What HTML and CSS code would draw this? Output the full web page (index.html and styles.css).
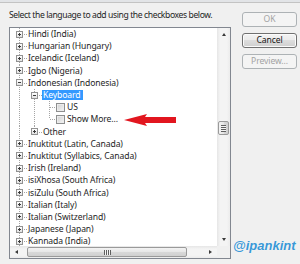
FILE: index.html
```html
<!DOCTYPE html>
<html>
<head>
<meta charset="utf-8">
<link rel="stylesheet" href="styles.css">
</head>
<body>
<div class="dialog">
  <div class="main">
    <div class="prompt">Select the language to add using the checkboxes below.</div>
    <div class="treebox">
      <div class="rows">
        <div class="row"><span class="c t"><span class="exp plus"></span></span><span class="lbl">Hindi (India)</span></div>
        <div class="row"><span class="c t"><span class="exp plus"></span></span><span class="lbl">Hungarian (Hungary)</span></div>
        <div class="row"><span class="c t"><span class="exp plus"></span></span><span class="lbl">Icelandic (Iceland)</span></div>
        <div class="row"><span class="c t"><span class="exp plus"></span></span><span class="lbl">Igbo (Nigeria)</span></div>
        <div class="row"><span class="c t"><span class="exp minus"></span></span><span class="lbl">Indonesian (Indonesia)</span></div>
        <div class="row"><span class="c v"></span><span class="c t"><span class="exp minus"></span></span><span class="lbl sel">Keyboard</span></div>
        <div class="row"><span class="c v"></span><span class="c v"></span><span class="c t"></span><span class="cb"></span><span class="lbl cbl">US</span></div>
        <div class="row"><span class="c v"></span><span class="c v"></span><span class="c l"></span><span class="cb"></span><span class="lbl cbl">Show More...</span></div>
        <div class="row"><span class="c v"></span><span class="c l"><span class="exp plus"></span></span><span class="lbl">Other</span></div>
        <div class="row"><span class="c t"><span class="exp plus"></span></span><span class="lbl">Inuktitut (Latin, Canada)</span></div>
        <div class="row"><span class="c t"><span class="exp plus"></span></span><span class="lbl">Inuktitut (Syllabics, Canada)</span></div>
        <div class="row"><span class="c t"><span class="exp plus"></span></span><span class="lbl">Irish (Ireland)</span></div>
        <div class="row"><span class="c t"><span class="exp plus"></span></span><span class="lbl">isiXhosa (South Africa)</span></div>
        <div class="row"><span class="c t"><span class="exp plus"></span></span><span class="lbl">isiZulu (South Africa)</span></div>
        <div class="row"><span class="c t"><span class="exp plus"></span></span><span class="lbl">Italian (Italy)</span></div>
        <div class="row"><span class="c t"><span class="exp plus"></span></span><span class="lbl">Italian (Switzerland)</span></div>
        <div class="row"><span class="c t"><span class="exp plus"></span></span><span class="lbl">Japanese (Japan)</span></div>
        <div class="row"><span class="c t"><span class="exp plus"></span></span><span class="lbl">Kannada (India)</span></div>
      </div>
      <div class="vscroll">
        <div class="sbtn"><span class="tri up"></span></div>
        <div class="vtrack"><div class="vthumb"><span class="vgrip"></span></div></div>
        <div class="sbtn"><span class="tri down"></span></div>
      </div>
      <div class="hscroll">
        <div class="hbtn"><span class="tri left"></span></div>
        <div class="htrack"><div class="hthumb"><span class="hgrip"></span></div></div>
        <div class="hbtn"><span class="tri right"></span></div>
      </div>
      <div class="corner"></div>
    </div>
  </div>
  <div class="side">
    <button class="btn dis">OK</button>
    <button class="btn def">Cancel</button>
    <button class="btn dis">Preview...</button>
    <div class="mark">@ipankint</div>
  </div>
  <svg class="arrow" width="54" height="14" viewBox="0 0 54 14">
    <polygon points="1,7 24,1 22,4 53,4 53,10 22,10 24,13" fill="#e2161f"/>
  </svg>
</div>
</body>
</html>
```
FILE: styles.css
```css
html, body {
  margin: 0;
  padding: 0;
}
body {
  background: #e2e4e7;
  font-family: "Noto Sans", "Open Sans", sans-serif;
  font-size: 8.6px;
  letter-spacing: -0.1px;
  color: #1e1e1e;
  width: 300px;
  height: 264px;
  overflow: hidden;
}
.dialog {
  position: relative;
  margin-top: 2px;
  height: 262px;
  box-sizing: border-box;
  border-top: 1px solid #c3c3c3;
  background: #f0f0f0;
  display: flex;
}
.main {
  padding-left: 9px;
  width: 222px;
  flex: none;
}
.prompt {
  padding-top: 6px;
  line-height: 12px;
  height: 12px;
  margin-bottom: 6px;
  white-space: nowrap;
  letter-spacing: -0.4px;
}
.treebox {
  width: 222px;
  height: 232px;
  box-sizing: border-box;
  border: 1px solid #828790;
  background: #fff;
  display: grid;
  grid-template-columns: 1fr 13px;
  grid-template-rows: 1fr 12px;
}
.rows {
  padding-left: 2px;
  overflow: hidden;
  --vd: repeating-linear-gradient(to bottom, #a5a5a5 0 1px, transparent 1px 2px);
  --hd: repeating-linear-gradient(to right, #a5a5a5 0 1px, transparent 1px 2px);
}
.row {
  display: flex;
  height: 12.2px;
  white-space: nowrap;
}
.c {
  width: 15px;
  flex: none;
  display: flex;
  align-items: center;
  justify-content: center;
}
.v {
  background: var(--vd) 7px 0 / 1px 100% no-repeat;
}
.t {
  background: var(--vd) 7px 0 / 1px 100% no-repeat, var(--hd) 8px 6px / 7px 1px no-repeat;
}
.l {
  background: var(--vd) 7px 0 / 1px 6px no-repeat, var(--hd) 8px 6px / 7px 1px no-repeat;
}
.exp {
  width: 7px;
  height: 7px;
  box-sizing: border-box;
  border: 1px solid #929292;
}
.plus {
  background:
    linear-gradient(#3c3c3c, #3c3c3c) 1px 2px / 3px 1px no-repeat,
    linear-gradient(#3c3c3c, #3c3c3c) 2px 1px / 1px 3px no-repeat,
    linear-gradient(#ffffff, #e2e2e2);
}
.minus {
  background:
    linear-gradient(#3c3c3c, #3c3c3c) 1px 2px / 3px 1px no-repeat,
    linear-gradient(#ffffff, #e2e2e2);
}
.lbl {
  align-self: center;
  line-height: 10px;
  padding: 0 2px 0 1px;
}
.sel {
  background: #3399ff;
  color: #fff;
}
.cb {
  align-self: center;
  width: 9px;
  height: 9px;
  margin-left: -1px;
  flex: none;
  box-sizing: border-box;
  border: 1px solid #8e8f8f;
  background: linear-gradient(135deg, #cfcfcf, #f6f6f6);
  box-shadow: inset 0 0 0 1px #ececec;
}
.cbl {
  padding-left: 2px;
}
.vscroll {
  display: flex;
  flex-direction: column;
  background: linear-gradient(to right, #e6e6e6, #f4f4f4 25%, #f4f4f4 75%, #ececec);
}
.sbtn {
  height: 13px;
  flex: none;
  display: flex;
  align-items: center;
  justify-content: center;
}
.tri {
  width: 0;
  height: 0;
}
.up {
  border-left: 2.5px solid transparent;
  border-right: 2.5px solid transparent;
  border-bottom: 3px solid #3a3a3a;
}
.down {
  border-left: 2.5px solid transparent;
  border-right: 2.5px solid transparent;
  border-top: 3px solid #3a3a3a;
}
.left {
  border-top: 2.5px solid transparent;
  border-bottom: 2.5px solid transparent;
  border-right: 3px solid #3a3a3a;
}
.right {
  border-top: 2.5px solid transparent;
  border-bottom: 2.5px solid transparent;
  border-left: 3px solid #3a3a3a;
}
.vtrack {
  flex: 1;
}
.vthumb {
  margin: 80px 1px 0;
  height: 14px;
  box-sizing: border-box;
  border: 1px solid #9a9a9a;
  border-radius: 2px;
  background: linear-gradient(to right, #f3f3f3, #e6e6e6 50%, #d9d9d9 50%, #d0d0d0);
  display: flex;
  align-items: center;
  justify-content: center;
}
.vgrip {
  width: 5px;
  height: 7px;
  background: repeating-linear-gradient(to bottom, #5f5f5f 0 1px, #f4f4f4 1px 2px);
}
.hscroll {
  display: flex;
  background: linear-gradient(to bottom, #e6e6e6, #f4f4f4 25%, #f4f4f4 75%, #ececec);
}
.hbtn {
  width: 13px;
  flex: none;
  display: flex;
  align-items: center;
  justify-content: center;
}
.htrack {
  flex: 1;
  display: flex;
  align-items: center;
}
.hthumb {
  margin-left: 4px;
  width: 160px;
  height: 10px;
  box-sizing: border-box;
  border: 1px solid #9a9a9a;
  border-radius: 2px;
  background: linear-gradient(to bottom, #f3f3f3, #e6e6e6 50%, #d9d9d9 50%, #d0d0d0);
  display: flex;
  align-items: center;
  justify-content: center;
}
.hgrip {
  width: 7px;
  height: 5px;
  background: repeating-linear-gradient(to right, #5f5f5f 0 1px, #f4f4f4 1px 2px);
}
.corner {
  background: #f0f0f0;
}
.side {
  margin-left: 11px;
  width: 55px;
  padding-top: 9px;
  display: flex;
  flex-direction: column;
  gap: 6px;
}
.btn {
  height: 15px;
  width: 55px;
  padding: 0;
  font-family: inherit;
  font-size: 8.6px;
  letter-spacing: -0.1px;
  line-height: 13px;
  border-radius: 3px;
}
.dis {
  border: 1px solid #adb2b5;
  background: #f4f4f4;
  color: #a3a3a3;
}
.def {
  border: 1px solid #707070;
  background: linear-gradient(#f3f3f3, #ebebeb 45%, #dddddd 50%, #cfcfcf);
  box-shadow: inset 0 0 0 1px #fbfbfb;
  color: #151515;
}
.mark {
  margin-top: auto;
  margin-bottom: 11px;
  margin-left: -9px;
  font-family: "Liberation Sans", Arial, sans-serif;
  font-style: italic;
  font-weight: bold;
  font-size: 13px;
  line-height: 14px;
  letter-spacing: 0;
  color: #3a98d6;
  text-shadow: 0 0 1px #fff;
  white-space: nowrap;
}
.arrow {
  position: absolute;
  left: 123px;
  top: 110px;
}
```
